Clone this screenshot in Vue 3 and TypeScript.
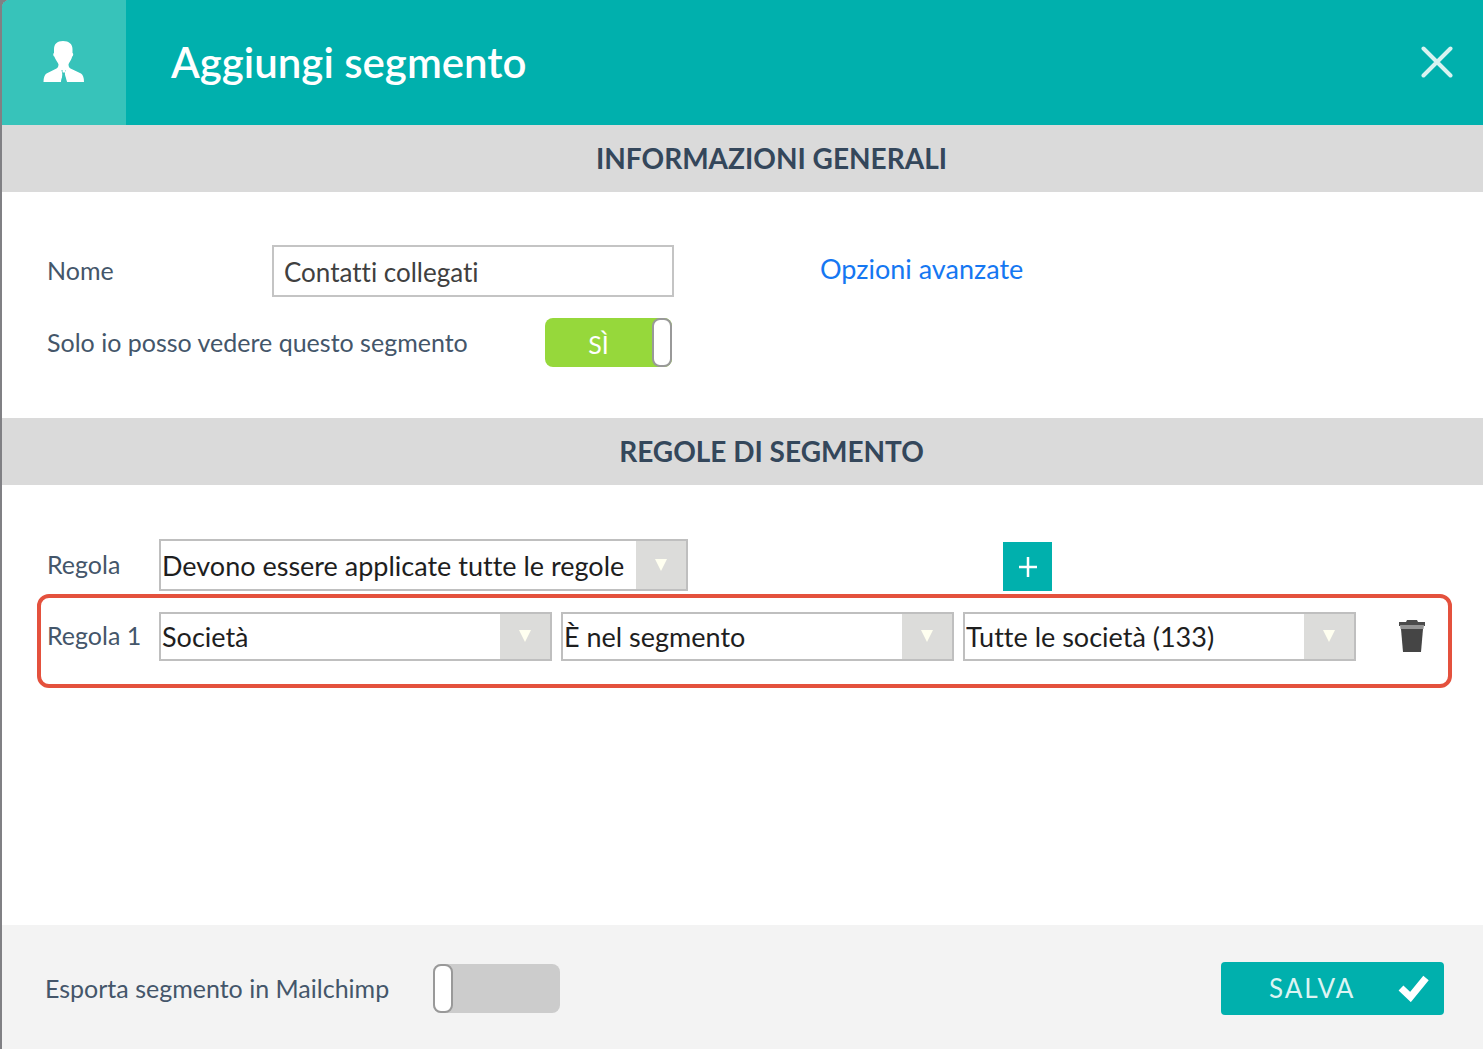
<script setup lang="ts">
import { ref } from 'vue'

interface Choice {
  id: string
  label: string
  options: string[]
  value: string
}

const nome = ref('Contatti collegati')
const privato = ref(true)
const esporta = ref(false)
const modo = ref('Devono essere applicate tutte le regole')
const modi = ['Devono essere applicate tutte le regole', 'Deve essere applicata almeno una regola']

const scelte = ref<Choice[]>([
  { id: 'entita', label: 'Entità', options: ['Società', 'Contatto'], value: 'Società' },
  { id: 'operatore', label: 'Operatore', options: ['È nel segmento', 'Non è nel segmento'], value: 'È nel segmento' },
  { id: 'valore', label: 'Segmento', options: ['Tutte le società (133)'], value: 'Tutte le società (133)' },
])
</script>

<template>
  <main class="dialog">
    <header class="head">
      <div class="tile">
        <svg width="42" height="42" viewBox="0 0 42 42" aria-hidden="true">
          <path
            fill="#fff"
            d="M20 0C14 0 11 3 11 8v4c-1 0-1 3 .3 3.500C12.500 19 14.500 21 15.500 23c0 2-.5 3.500-2 4.500L3.500 32.500c-2 1.500-3 4-3 8.500H18l1.500-7-1-5h4l-1 5 2 7H41c0-4.500-1-7-3-8.500L27.500 27.500c-1.500-1-2-2.500-2-4.500 1-2 3-4 3.700-7.500 1.300-.5 1.300-3.500.3-3.500V8c0-5-3.500-8-9.500-8Z"
          />
          <path fill="#fff" d="M15.500 22h10l-1.500 5h-7zM19.500 28.500h2.500v3h-2.500z" />
          <path fill="#37c3ba" d="M20 32h1.500l2.500 9h-6z" />
        </svg>
      </div>
      <h1>Aggiungi segmento</h1>
      <button class="close" type="button" aria-label="Chiudi">
        <svg width="32" height="32" viewBox="0 0 32 32" aria-hidden="true">
          <path d="M2.500 2.500l27 27M29.500 2.500l-27 27" stroke="#d9f3f1" stroke-width="4" stroke-linecap="round" />
        </svg>
      </button>
    </header>

    <h2 class="band">INFORMAZIONI GENERALI</h2>
    <section class="general">
      <div class="fields">
        <div class="field">
          <label for="nome">Nome</label>
          <input id="nome" v-model="nome" class="text" type="text" />
        </div>
        <div class="field private">
          <label for="privato">Solo io posso vedere questo segmento</label>
          <span class="switch">
            <input id="privato" v-model="privato" type="checkbox" />
            <span v-if="privato" class="state">SÌ</span>
            <span class="knob"></span>
          </span>
        </div>
      </div>
      <a class="advanced" href="#">Opzioni avanzate</a>
    </section>

    <h2 class="band">REGOLE DI SEGMENTO</h2>
    <section class="rules">
      <div class="mode">
        <label for="modo">Regola</label>
        <span class="select tall">
          <select id="modo" v-model="modo">
            <option v-for="m in modi" :key="m">{{ m }}</option>
          </select>
          <span class="arrow"></span>
        </span>
        <button class="add" type="button" aria-label="Aggiungi regola">
          <svg width="18" height="20" viewBox="0 0 18 20" aria-hidden="true">
            <path d="M9 0v20M0 10h18" stroke="#fff" stroke-width="2.500" />
          </svg>
        </button>
      </div>
      <div class="rule">
        <label for="entita">Regola 1</label>
        <div class="choices">
          <span v-for="s in scelte" :key="s.id" class="select">
            <select :id="s.id" v-model="s.value" :aria-label="s.label">
              <option v-for="o in s.options" :key="o">{{ o }}</option>
            </select>
            <span class="arrow"></span>
          </span>
        </div>
        <button class="trash" type="button" aria-label="Elimina regola">
          <svg width="28" height="32" viewBox="0 0 28 32" aria-hidden="true">
            <path d="M9 0h10l1 2h7v4H1V2h7z" fill="#4b4b4b" />
            <path d="M2 5h24l-.5 4h-23z" fill="#949494" />
            <path d="M3 9h22l-2 23H5z" fill="#454545" />
          </svg>
        </button>
      </div>
    </section>

    <footer class="foot">
      <label for="esporta">Esporta segmento in Mailchimp</label>
      <span class="switch">
        <input id="esporta" v-model="esporta" type="checkbox" />
        <span class="knob"></span>
      </span>
      <button class="save" type="button">
        <span>SALVA</span>
        <svg width="32" height="28" viewBox="0 0 32 28" aria-hidden="true">
          <path d="M3 14l9.500 9L28 4" fill="none" stroke="#fff" stroke-width="7" />
        </svg>
      </button>
    </footer>
  </main>
</template>

<style>
body {
  margin: 0;
  background: #808084;
}
</style>

<style scoped>
.dialog {
  box-sizing: border-box;
  display: flex;
  flex-direction: column;
  min-height: 100vh;
  margin-left: 2px;
  overflow: hidden;
  border-radius: 8px 0 0 0;
  background: #fff;
  color: #44566a;
  font-family: Lato, "Liberation Sans", sans-serif;
  font-size: 25px;
  font-variant-ligatures: none;
  line-height: 32px;
}
button {
  display: flex;
  align-items: center;
  justify-content: center;
  padding: 0;
  border: 0;
  background: none;
  font: inherit;
  cursor: pointer;
}
svg {
  display: block;
  flex: none;
}
.head {
  display: flex;
  align-items: center;
  height: 125px;
  background: #00b0ad;
}
.tile {
  display: flex;
  align-items: center;
  justify-content: center;
  align-self: stretch;
  width: 124px;
  padding-bottom: 1px;
  background: #37c3ba;
}
h1 {
  flex: 1;
  margin: 0 0 0 45px;
  padding-bottom: 2px;
  color: #fff;
  font-size: 42px;
  font-weight: 600;
  line-height: 48px;
}
.close {
  margin-right: 30px;
  padding-bottom: 2px;
}
.band {
  margin: 0;
  padding: 0 0 1px 58px;
  background: #dadada;
  color: #34475b;
  font-size: 28px;
  font-weight: 700;
  line-height: 66px;
  text-align: center;
}
.general {
  display: flex;
  gap: 146px;
  padding: 53px 45px 51px;
}
.fields {
  display: flex;
  flex-direction: column;
  gap: 21px;
  width: 627px;
}
.field {
  display: flex;
  align-items: center;
  justify-content: space-between;
}
.private {
  padding-right: 2px;
}
.field label,
.mode label,
.rule label {
  padding-bottom: 2px;
}
.text {
  box-sizing: border-box;
  width: 402px;
  height: 52px;
  padding: 2px 10px 0;
  border: 2px solid #c4c4c4;
  background: #fff;
  color: #404040;
  font: inherit;
  font-size: 26px;
}
.advanced {
  padding-top: 8px;
  color: #1577f2;
  font-size: 27px;
  text-decoration: none;
}
.switch {
  position: relative;
  display: flex;
  width: 127px;
  height: 49px;
}
.switch input {
  width: 100%;
  height: 100%;
  margin: 0;
  border-radius: 8px;
  background: #ccc;
  appearance: none;
}
.switch input:checked {
  background: #96d83b;
}
.state,
.knob {
  position: absolute;
  pointer-events: none;
}
.state {
  inset: 0 20px 0 0;
  color: #fff;
  line-height: 52px;
  text-align: center;
}
.knob {
  box-sizing: border-box;
  top: 0;
  left: 0;
  width: 20px;
  height: 49px;
  border: 2px solid #999;
  border-radius: 8px;
  background: #fff;
}
.switch input:checked ~ .knob {
  right: 0;
  left: auto;
}
.rules {
  flex: 1;
  padding: 54px 31px 32px 35px;
}
.mode,
.rule {
  display: flex;
  align-items: center;
}
.mode {
  padding-left: 10px;
}
.mode label,
.rule label {
  flex: none;
  width: 112px;
}
.rule {
  box-sizing: border-box;
  height: 94px;
  margin-top: 3px;
  padding: 0 22px 10px 6px;
  border: 4px solid #e4513d;
  border-radius: 12px;
}
.choices {
  display: grid;
  flex: 1;
  grid-template-columns: repeat(3, 1fr);
  gap: 9px;
}
.select {
  position: relative;
  display: flex;
  height: 49px;
}
.select.tall {
  width: 529px;
  height: 52px;
}
.select select {
  box-sizing: border-box;
  width: 100%;
  padding: 1px 52px 0 1px;
  border: 2px solid #bfbfbf;
  border-radius: 0;
  background: #fff;
  color: #1e1e1e;
  font: inherit;
  font-size: 27px;
  appearance: none;
}
.arrow {
  position: absolute;
  top: 2px;
  right: 2px;
  bottom: 2px;
  display: flex;
  align-items: center;
  justify-content: center;
  width: 50px;
  background: #dcdcda;
  pointer-events: none;
}
.arrow::after {
  content: "";
  border: 6px solid transparent;
  border-top: 12px solid #fffff0;
  border-bottom: 0;
}
.add {
  align-self: flex-end;
  width: 49px;
  height: 49px;
  margin-left: 315px;
  background: #00b0ad;
}
.trash {
  margin-left: 42px;
}
.foot {
  display: flex;
  align-items: center;
  box-sizing: border-box;
  height: 124px;
  padding: 2px 39px 0 43px;
  background: #f3f3f3;
}
.foot .switch {
  margin-left: 44px;
}
.save {
  box-sizing: border-box;
  width: 223px;
  height: 53px;
  margin-left: auto;
  padding: 0 14px 0 48px;
  border-radius: 4px;
  background: #00b0ad;
  color: #dcf4f3;
  font-size: 26px;
  letter-spacing: 2px;
  justify-content: space-between;
}
</style>
